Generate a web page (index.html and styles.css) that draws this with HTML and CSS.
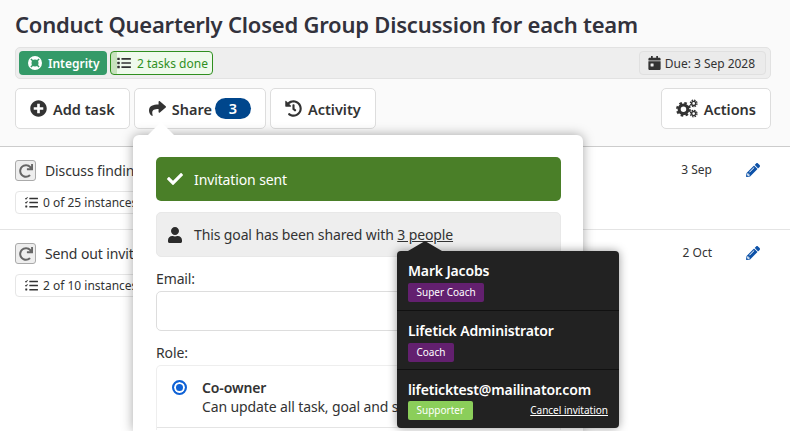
FILE: index.html
```html
<!DOCTYPE html>
<html>
<head>
  <title>Goal</title>
  <link rel="stylesheet" href="styles.css">
</head>
<body>
  <div class="goal-header">
    <h1>Conduct Quearterly Closed Group Discussion for each team</h1>

    <div class="meta-bar">
      <span class="tag tag-value">
        <svg class="icon" viewBox="0 0 24 24"><circle cx="12" cy="12" r="9" fill="none" stroke="#fff" stroke-width="6"/><path d="M5 5l14 14M19 5L5 19" stroke="#349a68" stroke-width="2.6"/></svg>
        Integrity
      </span>
      <span class="tag tag-progress">
        <svg class="icon" viewBox="0 0 512 512" fill="#2f8f1f"><rect x="10" y="60" width="90" height="90" rx="14"/><rect x="10" y="210" width="90" height="90" rx="14"/><rect x="10" y="360" width="90" height="90" rx="14"/><rect x="160" y="75" width="350" height="60" rx="12"/><rect x="160" y="225" width="350" height="60" rx="12"/><rect x="160" y="375" width="350" height="60" rx="12"/></svg>
        2 tasks done
      </span>
      <span class="tag tag-due">
        <svg class="icon" viewBox="0 0 448 512" fill="#3f3f3f"><path d="M12 192h424c6.6 0 12 5.4 12 12v260c0 26.5-21.5 48-48 48H48c-26.5 0-48-21.5-48-48V204c0-6.6 5.4-12 12-12zm436-44v-36c0-26.5-21.5-48-48-48h-48V12c0-6.6-5.4-12-12-12h-40c-6.6 0-12 5.4-12 12v52H160V12c0-6.6-5.4-12-12-12h-40c-6.6 0-12 5.4-12 12v52H48C21.5 64 0 85.5 0 112v36c0 6.6 5.4 12 12 12h424c6.6 0 12-5.4 12-12z"/><rect x="80" y="270" width="110" height="110" rx="12" fill="#eee"/></svg>
        Due: 3 Sep 2028
      </span>
    </div>

    <div class="toolbar">
      <button class="btn">
        <svg class="icon" viewBox="0 0 512 512"><path d="M256 8C119 8 8 119 8 256s111 248 248 248 248-111 248-248S393 8 256 8zm144 276c0 6.6-5.4 12-12 12h-92v92c0 6.6-5.4 12-12 12h-56c-6.6 0-12-5.4-12-12v-92h-92c-6.6 0-12-5.4-12-12v-56c0-6.6 5.4-12 12-12h92v-92c0-6.6 5.4-12 12-12h56c6.6 0 12 5.4 12 12v92h92c6.6 0 12 5.4 12 12v56z"/></svg>
        Add task
      </button>
      <button class="btn">
        <svg class="icon" viewBox="0 0 512 512"><path d="M503.691 189.836L327.687 37.851C312.281 24.546 288 35.347 288 56.015v80.053C127.371 137.907 0 170.1 0 322.326c0 61.441 39.581 122.309 83.333 154.132 13.653 9.931 33.111-2.533 28.077-18.631C66.066 312.814 132.917 274.316 288 272.085V360c0 20.7 24.3 31.453 39.687 18.164l176.004-152c11.071-9.562 11.086-26.753 0-36.328z"/></svg>
        Share <span class="count">3</span>
      </button>
      <button class="btn">
        <svg class="icon" viewBox="0 0 512 512"><path d="M504 255.531c.253 136.64-111.18 248.372-247.82 248.468-59.015.042-113.223-20.53-155.822-54.911-11.077-8.94-11.905-25.541-1.839-35.607l11.267-11.267c8.609-8.609 22.353-9.551 31.891-1.984C173.062 425.135 212.781 440 256 440c101.705 0 184-82.311 184-184 0-101.705-82.311-184-184-184-48.814 0-93.149 18.969-126.068 49.932l50.754 50.754c10.08 10.08 2.941 27.314-11.313 27.314H24c-8.837 0-16-7.163-16-16V38.627c0-14.254 17.234-21.393 27.314-11.314l49.372 49.372C129.209 34.136 189.552 8 256 8c136.81 0 247.747 110.78 248 247.531zm-180.912 78.784l9.823-12.63c8.138-10.463 6.253-25.542-4.21-33.679L288 256.349V152c0-13.255-10.745-24-24-24h-16c-13.255 0-24 10.745-24 24v135.651l65.409 50.874c10.463 8.137 25.541 6.253 33.679-4.21z"/></svg>
        Activity
      </button>
      <button class="btn btn-right">
        <svg class="icon icon-cogs" viewBox="0 0 28 24"><circle cx="9.5" cy="13" r="5.5" fill="none" stroke="#333" stroke-width="4"/><circle cx="9.5" cy="13" r="8" fill="none" stroke="#333" stroke-width="3" stroke-dasharray="3.2 3.1"/><circle cx="22.5" cy="5.5" r="2.6" fill="none" stroke="#333" stroke-width="1.8"/><circle cx="22.5" cy="5.5" r="4.2" fill="none" stroke="#333" stroke-width="1.5" stroke-dasharray="2 1.3"/><circle cx="22.5" cy="18.5" r="2.6" fill="none" stroke="#333" stroke-width="1.8"/><circle cx="22.5" cy="18.5" r="4.2" fill="none" stroke="#333" stroke-width="1.5" stroke-dasharray="2 1.3"/></svg>
        Actions
      </button>
    </div>
  </div>

  <div class="task-list">
    <div class="task">
      <div class="task-main">
        <div class="task-title">
          <span class="repeat">
            <svg viewBox="0 0 512 512"><path d="M500.33 0h-47.41a12 12 0 0 0-12 12.57l4 82.76A247.42 247.42 0 0 0 256 8C119.34 8 7.9 119.53 8 256.19 8.1 393.07 119.1 504 256 504a247.1 247.1 0 0 0 166.18-63.91 12 12 0 0 0 .48-17.43l-34-34a12 12 0 0 0-16.38-.55A176 176 0 1 1 402.1 157.8l-101.53-4.87a12 12 0 0 0-12.57 12v47.41a12 12 0 0 0 12 12h200.33a12 12 0 0 0 12-12V12a12 12 0 0 0-12-12z"/></svg>
          </span>
          Discuss findings
        </div>
        <span class="instances">
          <svg class="icon" viewBox="0 0 512 512"><path d="M10 90l30 30 60-70M10 250l30 30 60-70" fill="none" stroke="#333" stroke-width="40"/><rect x="10" y="370" width="80" height="80" rx="14"/><rect x="170" y="70" width="340" height="60" rx="10"/><rect x="170" y="230" width="340" height="60" rx="10"/><rect x="170" y="390" width="340" height="60" rx="10"/></svg>
          0 of 25 instances
        </span>
      </div>
      <span class="task-date">3 Sep</span>
      <svg class="pencil" viewBox="0 0 512 512"><path d="M497.9 142.1l-46.1 46.1c-4.7 4.7-12.3 4.7-17 0l-111-111c-4.7-4.7-4.7-12.3 0-17l46.1-46.1c18.7-18.7 49.1-18.7 67.9 0l60.1 60.1c18.8 18.7 18.8 49.1 0 67.9zM284.2 99.8L21.6 362.4.4 483.9c-2.9 16.4 11.4 30.6 27.8 27.8l121.5-21.3 262.6-262.6c4.7-4.7 4.7-12.3 0-17l-111-111c-4.8-4.7-12.4-4.7-17.1 0zM124.1 339.9c-5.5-5.5-5.5-14.3 0-19.8l154-154c5.5-5.5 14.3-5.5 19.8 0s5.5 14.3 0 19.8l-154 154c-5.5 5.5-14.3 5.5-19.8 0zM88 424h48v36.3l-64.5 11.3-31.1-31.1L51.7 376H88v48z"/></svg>
    </div>
    <div class="task">
      <div class="task-main">
        <div class="task-title">
          <span class="repeat">
            <svg viewBox="0 0 512 512"><path d="M500.33 0h-47.41a12 12 0 0 0-12 12.57l4 82.76A247.42 247.42 0 0 0 256 8C119.34 8 7.9 119.53 8 256.19 8.1 393.07 119.1 504 256 504a247.1 247.1 0 0 0 166.18-63.91 12 12 0 0 0 .48-17.43l-34-34a12 12 0 0 0-16.38-.55A176 176 0 1 1 402.1 157.8l-101.53-4.87a12 12 0 0 0-12.57 12v47.41a12 12 0 0 0 12 12h200.33a12 12 0 0 0 12-12V12a12 12 0 0 0-12-12z"/></svg>
          </span>
          Send out invitations
        </div>
        <span class="instances">
          <svg class="icon" viewBox="0 0 512 512"><path d="M10 90l30 30 60-70M10 250l30 30 60-70" fill="none" stroke="#333" stroke-width="40"/><rect x="10" y="370" width="80" height="80" rx="14"/><rect x="170" y="70" width="340" height="60" rx="10"/><rect x="170" y="230" width="340" height="60" rx="10"/><rect x="170" y="390" width="340" height="60" rx="10"/></svg>
          2 of 10 instances
        </span>
      </div>
      <span class="task-date">2 Oct</span>
      <svg class="pencil" viewBox="0 0 512 512"><path d="M497.9 142.1l-46.1 46.1c-4.7 4.7-12.3 4.7-17 0l-111-111c-4.7-4.7-4.7-12.3 0-17l46.1-46.1c18.7-18.7 49.1-18.7 67.9 0l60.1 60.1c18.8 18.7 18.8 49.1 0 67.9zM284.2 99.8L21.6 362.4.4 483.9c-2.9 16.4 11.4 30.6 27.8 27.8l121.5-21.3 262.6-262.6c4.7-4.7 4.7-12.3 0-17l-111-111c-4.8-4.7-12.4-4.7-17.1 0zM124.1 339.9c-5.5-5.5-5.5-14.3 0-19.8l154-154c5.5-5.5 14.3-5.5 19.8 0s5.5 14.3 0 19.8l-154 154c-5.5 5.5-14.3 5.5-19.8 0zM88 424h48v36.3l-64.5 11.3-31.1-31.1L51.7 376H88v48z"/></svg>
    </div>
  </div>

  <div class="share-popover">
    <div class="alert alert-success">
      <svg class="alert-icon" viewBox="0 0 512 512" fill="#fff"><path d="M173.898 439.404l-166.4-166.4c-9.997-9.997-9.997-26.206 0-36.204l36.203-36.204c9.997-9.998 26.207-9.998 36.204 0L192 312.69 432.095 72.596c9.997-9.997 26.207-9.997 36.204 0l36.203 36.204c9.997 9.997 9.997 26.206 0 36.204l-294.4 294.401c-9.998 9.997-26.207 9.997-36.204-.001z"/></svg>
      Invitation sent
    </div>
    <div class="alert alert-info">
      <svg class="alert-icon" viewBox="0 0 448 512" fill="#2b2b2b"><path d="M224 256c70.7 0 128-57.3 128-128S294.7 0 224 0 96 57.3 96 128s57.3 128 128 128zm89.6 32h-16.7c-22.2 10.2-46.9 16-72.9 16s-50.6-5.8-72.9-16h-16.7C60.2 288 0 348.2 0 422.4V464c0 26.5 21.5 48 48 48h352c26.5 0 48-21.5 48-48v-41.6c0-74.2-60.2-134.4-134.4-134.4z"/></svg>
      <span>This goal has been shared with <u>3 people</u></span>
    </div>
    <label class="field-label">Email:</label>
    <input class="field-input" type="text">
    <label class="field-label">Role:</label>
    <div class="role-list">
      <div class="role">
        <span class="radio"></span>
        <div>
          <strong>Co-owner</strong>
          <div>Can update all task, goal and settings</div>
        </div>
      </div>
    </div>
  </div>

  <div class="people-tip">
    <div class="person">
      <div class="person-name">Mark Jacobs</div>
      <span class="badge badge-coach">Super Coach</span>
    </div>
    <div class="person">
      <div class="person-name">Lifetick Administrator</div>
      <span class="badge badge-coach">Coach</span>
    </div>
    <div class="person">
      <div class="person-name">lifeticktest@mailinator.com</div>
      <div class="person-row">
        <span class="badge badge-supporter">Supporter</span>
        <a class="cancel" href="#">Cancel invitation</a>
      </div>
    </div>
  </div>
</body>
</html>
```

FILE: styles.css
```css
html, body {
  height: 431px;
  overflow: hidden;
}
body {
  margin: 0;
  position: relative;
  font-family: "Noto Sans", "Open Sans", sans-serif;
  font-size: 14px;
  color: #333;
  background-color: #fff;
}
.icon {
  width: 17px;
  height: 17px;
  fill: #333;
  flex: none;
}

/* header */
.goal-header {
  height: 147px;
  box-sizing: border-box;
  padding: 8px 19px 0 15px;
  background-color: #fafafa;
  border-bottom: 1px solid #ccc;
}
h1 {
  margin: 0 0 6px;
  font-size: 22px;
  line-height: 33px;
  font-weight: 600;
  letter-spacing: -0.22px;
  color: #32323c;
}
.meta-bar {
  display: flex;
  align-items: center;
  gap: 3px;
  height: 32px;
  box-sizing: border-box;
  padding: 0 4px 0 3px;
  background-color: #eee;
  border: 1px solid #e2e2e2;
  border-radius: 5px;
}
.tag {
  display: flex;
  align-items: center;
  gap: 6px;
  height: 24px;
  box-sizing: border-box;
  border-radius: 4px;
  font-size: 12px;
}
.tag .icon {
  width: 14px;
  height: 14px;
}
.tag-value {
  width: 88px;
  padding-left: 9px;
  background-color: #349a68;
  color: #fff;
  font-weight: 600;
}
.tag-progress {
  width: 103px;
  padding-left: 6px;
  background: linear-gradient(to right, #c7e2bd 6px, #effaec 6px);
  border: 1px solid #2f8f1f;
  color: #2f8f1f;
}
.tag-due {
  margin-left: auto;
  padding: 0 10px 0 8px;
  background-color: #ebebeb;
  border: 1px solid #e0e0e0;
  color: #333;
  letter-spacing: -0.03px;
  gap: 4px;
}
.tag-due .icon {
  width: 13px;
}
.toolbar {
  display: flex;
  gap: 4px;
  margin-top: 9px;
}
.btn {
  display: flex;
  align-items: center;
  gap: 6px;
  height: 41px;
  box-sizing: border-box;
  padding: 0 14px;
  font: 600 14.5px "Noto Sans", "Open Sans", sans-serif;
  color: #333;
  background-color: #fff;
  border: 1px solid #ddd;
  border-radius: 5px;
}
.btn-right {
  margin-left: auto;
}
.icon-cogs {
  width: 22px;
  height: 19px;
}
.count {
  margin-left: -3px;
  width: 36px;
  line-height: 21px;
  border-radius: 11px;
  background-color: #00468c;
  color: #fff;
  text-align: center;
}

/* tasks */
.task {
  display: flex;
  align-items: flex-start;
  height: 83px;
  box-sizing: border-box;
  padding: 13px 30px 0 15px;
  border-bottom: 1px solid #e4e4e4;
}
.task:last-child {
  border-bottom: 0;
}
.task-main {
  flex: 1;
}
.task-title {
  display: flex;
  align-items: center;
  gap: 9px;
  font-size: 14px;
  letter-spacing: -0.12px;
  line-height: 21px;
}
.repeat {
  display: flex;
  align-items: center;
  justify-content: center;
  width: 21px;
  height: 21px;
  box-sizing: border-box;
  background-color: #eee;
  border: 1px solid #aaa;
  border-radius: 3px;
}
.repeat svg {
  width: 14px;
  height: 14px;
  fill: #666;
}
.instances {
  display: inline-flex;
  align-items: center;
  gap: 5px;
  height: 23px;
  box-sizing: border-box;
  margin-top: 10px;
  padding: 0 6px 0 9px;
  background-color: #fff;
  border: 1px solid #e6e6e6;
  border-radius: 4px;
  font-size: 12px;
}
.instances .icon {
  width: 13px;
  height: 13px;
}
.task-date {
  font-size: 12px;
  line-height: 20px;
  margin-right: 34px;
}
.pencil {
  width: 14px;
  height: 14px;
  margin-top: 3px;
  fill: #0d52a8;
}

/* share popover */
.share-popover {
  position: absolute;
  left: 133px;
  top: 135px;
  width: 450px;
  height: 296px;
  box-sizing: border-box;
  padding: 22px 22px 0 23px;
  background-color: #fff;
  border-radius: 6px 6px 0 0;
  box-shadow: 0 0 12px rgba(0, 0, 0, 0.35);
  font-size: 14px;
  letter-spacing: -0.12px;
}
.share-popover::before {
  content: "";
  position: absolute;
  left: 15px;
  top: -13px;
  width: 26px;
  height: 13px;
  background-color: #fff;
  clip-path: polygon(50% 0, 100% 100%, 0 100%);
}
.alert {
  display: flex;
  align-items: center;
  gap: 11px;
  box-sizing: border-box;
  padding-left: 11px;
  border-radius: 5px;
}
.alert-icon {
  width: 16px;
  height: 16px;
  flex: none;
}
.alert-success {
  height: 44px;
  background-color: #4a7f28;
  color: #fff;
}
.alert-info {
  height: 45px;
  margin-top: 11px;
  padding-left: 10px;
  background-color: #eee;
  border: 1px solid #e8e8e8;
  color: #333;
}
.field-label {
  display: block;
  margin-top: 11px;
  line-height: 21px;
}
.field-input {
  display: block;
  width: 100%;
  height: 40px;
  box-sizing: border-box;
  margin-top: 2px;
  border: 1px solid #ddd;
  border-radius: 5px;
}
.role-list {
  height: 65px;
  box-sizing: border-box;
  margin-top: 2px;
  border: 1px solid #eee;
  border-bottom: 0;
  border-radius: 5px 5px 0 0;
}
.role {
  display: flex;
  gap: 15px;
  height: 62px;
  box-sizing: border-box;
  padding: 12px 15px;
  border-bottom: 1px solid #e4e4e4;
  line-height: 19px;
}
.role strong {
  font-weight: 600;
}
.radio {
  width: 15px;
  height: 15px;
  margin-top: 2px;
  flex: none;
  box-sizing: border-box;
  border: 2px solid #0f62d6;
  border-radius: 50%;
  background-color: #0f62d6;
  box-shadow: inset 0 0 0 2px #fff;
}

/* people tooltip */
.people-tip {
  position: absolute;
  left: 397px;
  top: 251px;
  width: 222px;
  background-color: #222;
  border-radius: 4px;
  box-shadow: 0 0 10px rgba(0, 0, 0, 0.4);
  color: #fff;
}
.people-tip::before {
  content: "";
  position: absolute;
  left: 11px;
  top: -10px;
  width: 34px;
  height: 10px;
  background-color: #222;
  clip-path: polygon(50% 0, 100% 100%, 0 100%);
}
.person {
  height: 59px;
  box-sizing: border-box;
  padding: 9px 11px 0;
  border-bottom: 1px solid #111;
}
.person:first-child {
  height: 60px;
}
.person:last-child {
  height: 58px;
  border-bottom: 0;
}
.person-name {
  font-size: 14px;
  letter-spacing: -0.15px;
  line-height: 21px;
  font-weight: 600;
}
.person-row {
  display: flex;
  align-items: center;
  justify-content: space-between;
}
.badge {
  display: inline-block;
  padding: 0 8.5px;
  line-height: 19px;
  border-radius: 2px;
  font-size: 10px;
  margin-top: 1px;
}
.badge-coach {
  background-color: #63206f;
}
.badge-supporter {
  background-color: #8bce5a;
}
.cancel {
  color: #fff;
  font-size: 10px;
}
```
